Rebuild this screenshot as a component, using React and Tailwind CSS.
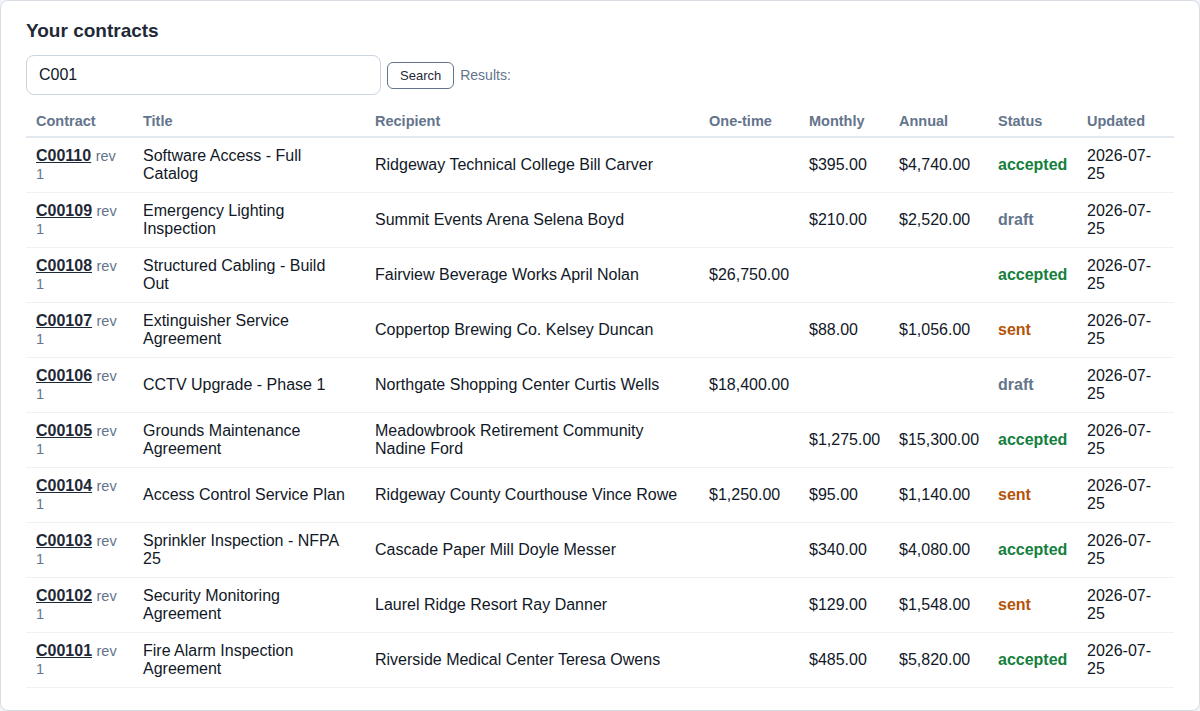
const rows = [
  ['C00110', 'Software Access - Full Catalog', 'Ridgeway Technical College Bill Carver', '', '$395.00', '$4,740.00', 'accepted'],
  ['C00109', 'Emergency Lighting Inspection', 'Summit Events Arena Selena Boyd', '', '$210.00', '$2,520.00', 'draft'],
  ['C00108', 'Structured Cabling - Build Out', 'Fairview Beverage Works April Nolan', '$26,750.00', '', '', 'accepted'],
  ['C00107', 'Extinguisher Service Agreement', 'Coppertop Brewing Co. Kelsey Duncan', '', '$88.00', '$1,056.00', 'sent'],
  ['C00106', 'CCTV Upgrade - Phase 1', 'Northgate Shopping Center Curtis Wells', '$18,400.00', '', '', 'draft'],
  ['C00105', 'Grounds Maintenance Agreement', 'Meadowbrook Retirement Community Nadine Ford', '', '$1,275.00', '$15,300.00', 'accepted'],
  ['C00104', 'Access Control Service Plan', 'Ridgeway County Courthouse Vince Rowe', '$1,250.00', '$95.00', '$1,140.00', 'sent'],
  ['C00103', 'Sprinkler Inspection - NFPA 25', 'Cascade Paper Mill Doyle Messer', '', '$340.00', '$4,080.00', 'accepted'],
  ['C00102', 'Security Monitoring Agreement', 'Laurel Ridge Resort Ray Danner', '', '$129.00', '$1,548.00', 'sent'],
  ['C00101', 'Fire Alarm Inspection Agreement', 'Riverside Medical Center Teresa Owens', '', '$485.00', '$5,820.00', 'accepted'],
];

const statusColor = {
  accepted: 'text-[#15803d]',
  draft: 'text-[#64748b]',
  sent: 'text-[#b45309]',
};

const td = 'px-[10px] py-[9px] leading-[18px] align-middle';

export default function App() {
  return (
    <div className="min-h-[711px] bg-[#f1f5f9] font-[family-name:Liberation_Sans,Arial,sans-serif] text-[#111827]">
      <div className="h-[711px] rounded-lg border border-[#d7dce3] bg-white px-[25px] pt-[19px]">
        <h2 className="text-[19px] font-bold leading-[22px] text-[#1f2937]">Your contracts</h2>
        <div className="mt-[13px] flex items-center gap-[6px]">
          <input
            defaultValue="C001"
            className="h-[40px] w-[355px] rounded-lg border border-[#cbd5e1] px-3 text-[16px] outline-none"
          />
          <button className="mt-[1px] h-[27px] rounded-md border border-[#64748b] px-3 text-[13px] text-[#1f2937]">
            Search
          </button>
          <span className="text-[14px] text-[#64748b]">Results:</span>
        </div>
        <table className="mt-[13px] w-[1148px] table-fixed border-collapse text-[16px]">
          <colgroup>
            <col className="w-[107px]" />
            <col className="w-[232px]" />
            <col className="w-[334px]" />
            <col className="w-[100px]" />
            <col className="w-[90px]" />
            <col className="w-[99px]" />
            <col className="w-[89px]" />
            <col className="w-[97px]" />
          </colgroup>
          <thead>
            <tr className="border-b-2 border-[#e2e8f0] text-left text-[14.5px] font-bold text-[#64748b]">
              {['Contract', 'Title', 'Recipient', 'One-time', 'Monthly', 'Annual', 'Status', 'Updated'].map((h) => (
                <th key={h} className="px-[10px] pb-[6px] pt-[4px] font-bold leading-[18px]">{h}</th>
              ))}
            </tr>
          </thead>
          <tbody>
            {rows.map((r) => (
              <tr key={r[0]} className="border-b border-[#eef1f5]">
                <td className={td}>
                  <a className="font-bold text-[#1f2937] underline">{r[0]}</a>{' '}
                  <span className="text-[14.5px] text-[#64748b]">rev 1</span>
                </td>
                <td className={td}>{r[1]}</td>
                <td className={td}>{r[2]}</td>
                <td className={td}>{r[3]}</td>
                <td className={td}>{r[4]}</td>
                <td className={td}>{r[5]}</td>
                <td className={`${td} font-bold ${statusColor[r[6]]}`}>{r[6]}</td>
                <td className={td}>2026-07-25</td>
              </tr>
            ))}
          </tbody>
        </table>
      </div>
    </div>
  );
}
